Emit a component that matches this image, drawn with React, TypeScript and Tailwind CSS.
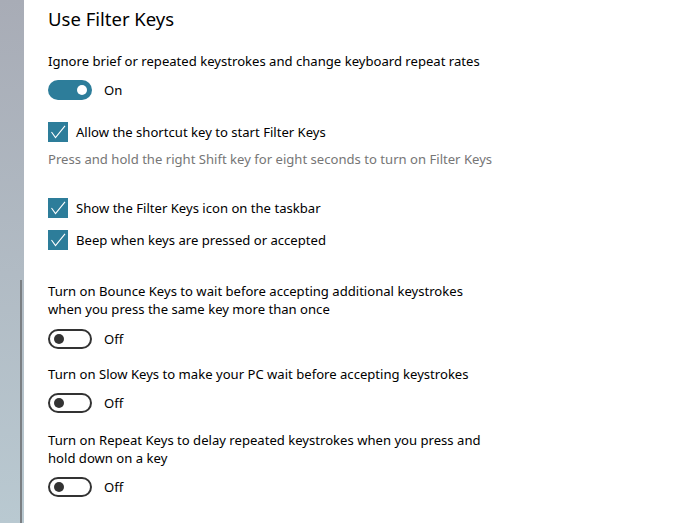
import React from "react";

const font = { fontFamily: '"Noto Sans", "Open Sans", sans-serif' };

function Toggle({ on }: { on: boolean }) {
  return (
    <div className="flex items-center h-[20px]">
      {on ? (
        <div className="w-[44px] h-[20px] rounded-full bg-[#2d7d9a] flex items-center justify-end pr-[5px]">
          <div className="w-[10px] h-[10px] rounded-full bg-white" />
        </div>
      ) : (
        <div className="w-[44px] h-[20px] rounded-full border-2 border-[#333333] flex items-center pl-[4px]">
          <div className="w-[10px] h-[10px] rounded-full bg-[#333333]" />
        </div>
      )}
      <span className="ml-[12px] text-black">{on ? "On" : "Off"}</span>
    </div>
  );
}

function Check({ label }: { label: string }) {
  return (
    <div className="flex items-center h-[20px]">
      <div className="w-[20px] h-[20px] bg-[#2d7d9a]">
        <svg width="20" height="20" viewBox="0 0 20 20" fill="none">
          <path d="M3.5 10 L7.5 15.5 L17 3.8" stroke="white" strokeWidth="1.1" />
        </svg>
      </div>
      <span className="ml-[8px] text-black">{label}</span>
    </div>
  );
}

export default function App() {
  return (
    <div className="w-[688px] h-[523px] flex bg-white overflow-hidden" style={font}>
      <div className="w-[24px] h-full bg-gradient-to-b from-[#a8acb6] to-[#b9c9d1] flex flex-col">
        <div className="h-[280px]" />
        <div className="flex-1 w-[2px] ml-[20px] bg-[#7b7f83]" />
      </div>
      <div className="flex-1 pl-[24px] text-[13.1px] leading-[18px] text-black">
        <h1 className="text-[18.5px] leading-[28px] mt-[5px]">Use Filter Keys</h1>
        <p className="mt-[19px]">Ignore brief or repeated keystrokes and change keyboard repeat rates</p>
        <div className="mt-[10px]"><Toggle on /></div>
        <div className="mt-[22px]"><Check label="Allow the shortcut key to start Filter Keys" /></div>
        <p className="mt-[8px] text-[#767676]">Press and hold the right Shift key for eight seconds to turn on Filter Keys</p>
        <div className="mt-[30px]"><Check label="Show the Filter Keys icon on the taskbar" /></div>
        <div className="mt-[12px]"><Check label="Beep when keys are pressed or accepted" /></div>
        <p className="mt-[32px]">
          Turn on Bounce Keys to wait before accepting additional keystrokes
          <br />
          when you press the same key more than once
        </p>
        <div className="mt-[11px]"><Toggle on={false} /></div>
        <p className="mt-[16px]">Turn on Slow Keys to make your PC wait before accepting keystrokes</p>
        <div className="mt-[10px]"><Toggle on={false} /></div>
        <p className="mt-[18px]">
          Turn on Repeat Keys to delay repeated keystrokes when you press and
          <br />
          hold down on a key
        </p>
        <div className="mt-[10px]"><Toggle on={false} /></div>
      </div>
    </div>
  );
}
